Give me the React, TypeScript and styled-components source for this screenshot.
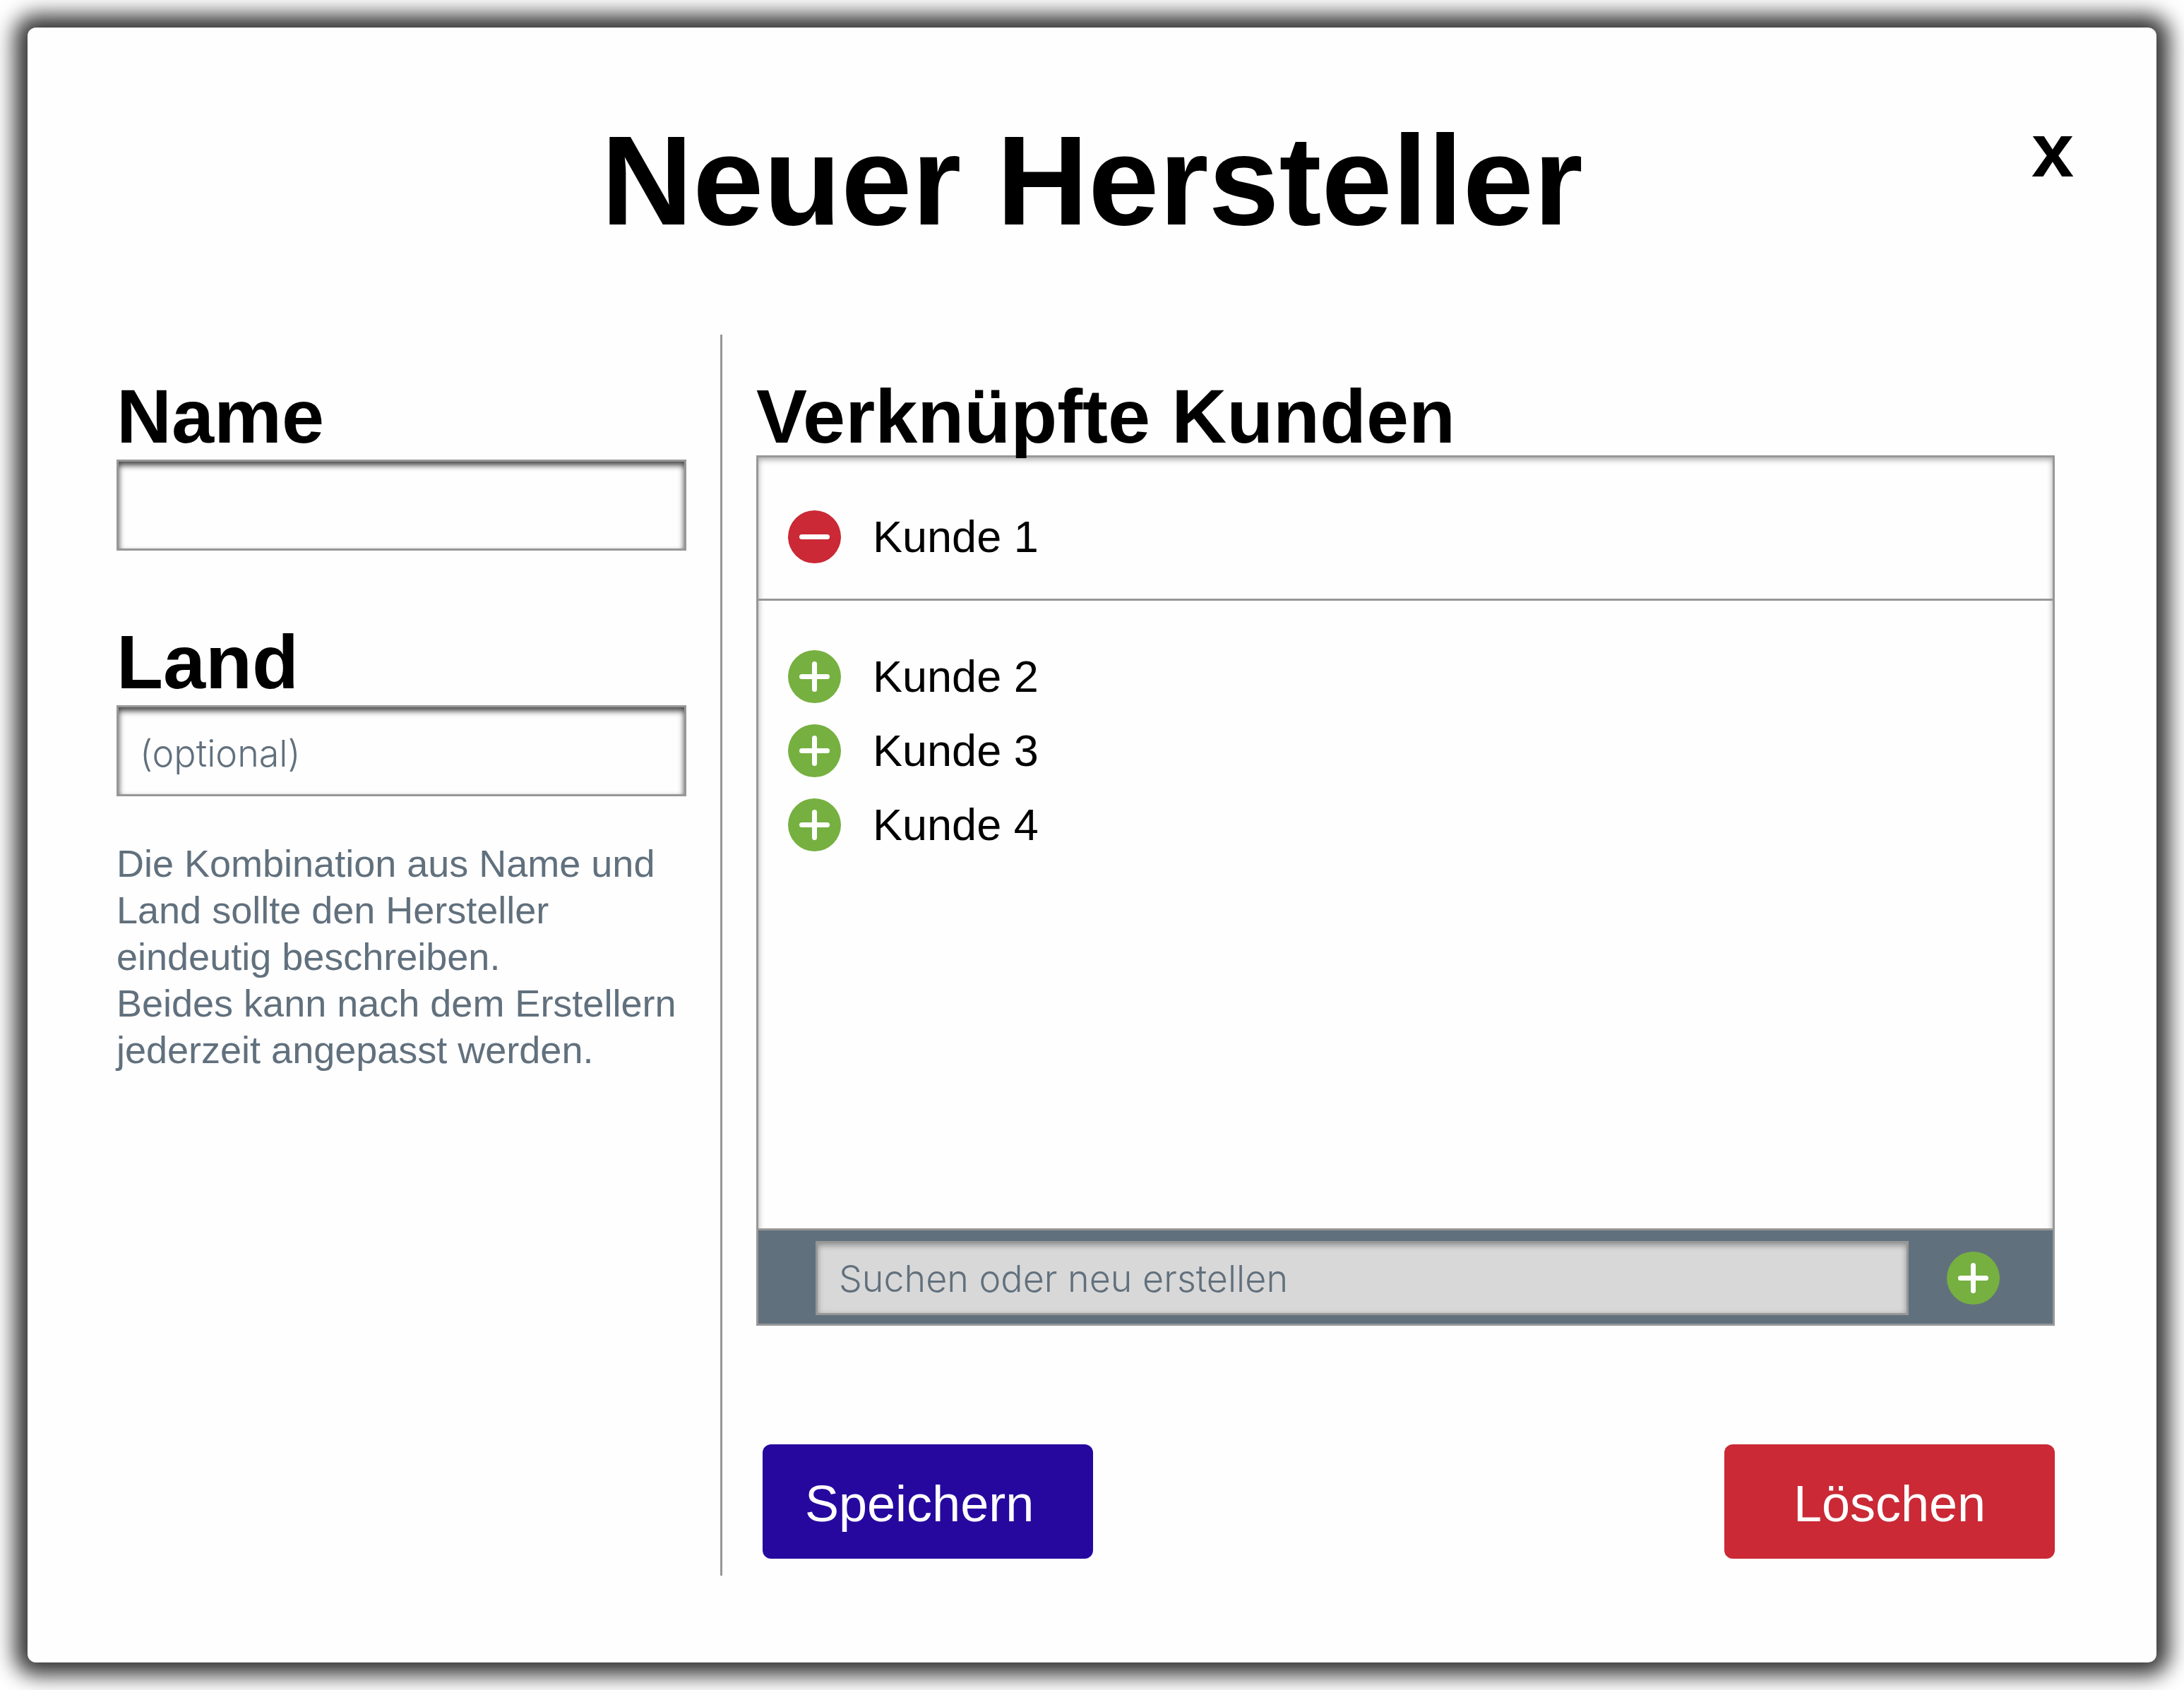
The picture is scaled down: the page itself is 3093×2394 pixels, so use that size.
import React, { useState } from "react";
import styled, { createGlobalStyle } from "styled-components";

const color = {
  surface: "#fefefe",
  line: "#979797",
  slate: "#61707d",
  field: "#d8d8d8",
  green: "#76b041",
  red: "#ca2935",
  blue: "#26089f",
};

const GlobalStyle = createGlobalStyle`
  *, *::before, *::after {
    box-sizing: border-box;
  }

  body {
    margin: 0;
    background: #ffffff;
    color: #000000;
    font-family: "Liberation Sans", Arial, Helvetica, sans-serif;
  }

  button, input {
    font-family: inherit;
  }
`;

const Page = styled.div`
  display: flex;
  min-height: 100vh;
  padding: 39px;
`;

const Dialog = styled.main`
  display: flex;
  flex: 1;
  flex-direction: column;
  min-width: 0;
  padding-bottom: 123px;
  border-radius: 12px;
  background: ${color.surface};
  box-shadow: 0 0 30px 18px rgba(0, 0, 0, 0.8);
`;

const Header = styled.header`
  display: grid;
  grid-template-columns: 1fr auto 1fr;
  align-items: start;
  padding: 120px 117px 0;
`;

const Title = styled.h1`
  grid-column: 2;
  margin: 0;
  font-size: 180px;
  font-weight: 700;
  line-height: 194px;
`;

const CloseButton = styled.button`
  justify-self: end;
  padding: 0;
  border: 0;
  background: none;
  color: inherit;
  font-size: 108px;
  font-weight: 700;
  line-height: 108px;
  cursor: pointer;
`;

const Body = styled.form`
  display: grid;
  flex: 1;
  grid-template-columns: minmax(0, 858fr) minmax(0, 1887fr);
  margin-top: 121px;
  padding: 0 144px 0 126px;
`;

const Details = styled.section`
  display: flex;
  flex-direction: column;
  padding: 60px 48px 0 0;
  border-right: 3px solid ${color.line};
`;

const Customers = styled.section`
  display: flex;
  flex-direction: column;
  padding: 60px 0 24px 48px;
`;

const Field = styled.div`
  display: flex;
  flex-direction: column;
  gap: 6px;

  & + & {
    margin-top: 102px;
  }
`;

const FieldLabel = styled.label`
  font-size: 108px;
  font-weight: 700;
  line-height: 111px;
`;

const SectionTitle = styled.h2`
  position: relative;
  z-index: 1;
  margin: 0;
  font-size: 108px;
  font-weight: 700;
  line-height: 111px;
`;

const TextInput = styled.input`
  width: 100%;
  min-width: 0;
  height: 129px;
  padding: 6px 30px 0;
  border: 3px solid ${color.line};
  border-radius: 0;
  outline: 0;
  background: ${color.surface};
  box-shadow: inset 0 5px 9px rgba(0, 0, 0, 0.75);
  color: #000000;
  font-size: 54px;

  &::placeholder {
    color: ${color.slate};
    font-family: Inter, "Liberation Sans", sans-serif;
    font-size: 52px;
    font-weight: 300;
    opacity: 1;
  }
`;

const SearchInput = styled(TextInput)`
  flex: 1;
  height: 105px;
  padding-top: 0;
  background: ${color.field};
  box-shadow: inset 0 3px 9px rgba(0, 0, 0, 0.35);
`;

const Hint = styled.p`
  margin: 62px 0 0;
  color: ${color.slate};
  font-size: 54px;
  line-height: 66px;
`;

const Panel = styled.div`
  display: flex;
  flex: 1;
  flex-direction: column;
  border: 3px solid ${color.line};
  box-shadow: inset 0 3px 9px rgba(0, 0, 0, 0.35);
`;

const CustomerList = styled.ul<{ $linked?: boolean }>`
  display: flex;
  flex: ${({ $linked }) => ($linked ? "none" : 1)};
  flex-direction: column;
  gap: 30px;
  margin: 0;
  padding: ${({ $linked }) => ($linked ? "75px 42px 50px" : "70px 42px")};
  border-bottom: 3px solid ${color.line};
  list-style: none;
`;

const CustomerRow = styled.li`
  display: flex;
  align-items: center;
  gap: 45px;
  font-size: 63px;
  line-height: 75px;
`;

const RoundButton = styled.button<{ $tone: string }>`
  flex: none;
  width: 75px;
  height: 75px;
  padding: 0;
  border: 0;
  border-radius: 50%;
  background: ${({ $tone }) => $tone};
  cursor: pointer;

  svg {
    display: block;
  }
`;

const SearchBar = styled.div`
  display: flex;
  align-items: center;
  gap: 54px;
  padding: 15px 75px 12px 81px;
  background: ${color.slate};
`;

const Actions = styled.div`
  display: flex;
  justify-content: space-between;
  margin-top: 168px;
  padding-left: 9px;
`;

const ActionButton = styled.button<{ $tone: string; $align?: string }>`
  width: 468px;
  height: 162px;
  padding: 6px 60px 0;
  border: 0;
  border-radius: 12px;
  background: ${({ $tone }) => $tone};
  color: #ffffff;
  font-size: 72px;
  text-align: ${({ $align }) => $align ?? "center"};
  cursor: pointer;
`;

function Glyph({ plus = false }: { plus?: boolean }) {
  return (
    <svg
      width="75"
      height="75"
      viewBox="0 0 75 75"
      fill="none"
      stroke="#ffffff"
      strokeWidth="7"
      strokeLinecap="round"
      aria-hidden="true"
    >
      <path d="M19.5 37.5H55.5" />
      {plus && <path d="M37.5 19.5V55.5" />}
    </svg>
  );
}

type Customer = { name: string; linked: boolean };

const initialCustomers: Customer[] = [
  { name: "Kunde 1", linked: true },
  { name: "Kunde 2", linked: false },
  { name: "Kunde 3", linked: false },
  { name: "Kunde 4", linked: false },
];

export default function App() {
  const [customers, setCustomers] = useState(initialCustomers);
  const [query, setQuery] = useState("");

  const toggle = (name: string) =>
    setCustomers((all) =>
      all.map((c) => (c.name === name ? { ...c, linked: !c.linked } : c))
    );

  const add = () => {
    const name = query.trim();
    if (!name) return;
    setCustomers((all) => [
      ...all.filter((c) => c.name !== name),
      { name, linked: true },
    ]);
    setQuery("");
  };

  const renderRow = ({ name, linked }: Customer) => (
    <CustomerRow key={name}>
      <RoundButton
        type="button"
        $tone={linked ? color.red : color.green}
        aria-label={linked ? `${name} entfernen` : `${name} hinzufügen`}
        onClick={() => toggle(name)}
      >
        <Glyph plus={!linked} />
      </RoundButton>
      <span>{name}</span>
    </CustomerRow>
  );

  return (
    <>
      <GlobalStyle />
      <Page>
        <Dialog>
          <Header>
            <Title>Neuer Hersteller</Title>
            <CloseButton type="button" aria-label="Schließen">
              x
            </CloseButton>
          </Header>
          <Body onSubmit={(event) => event.preventDefault()}>
            <Details>
              <Field>
                <FieldLabel htmlFor="name">Name</FieldLabel>
                <TextInput id="name" type="text" />
              </Field>
              <Field>
                <FieldLabel htmlFor="country">Land</FieldLabel>
                <TextInput id="country" type="text" placeholder="(optional)" />
              </Field>
              <Hint>
                Die Kombination aus Name und Land sollte den Hersteller
                eindeutig beschreiben.
                <br />
                Beides kann nach dem Erstellern jederzeit angepasst werden.
              </Hint>
            </Details>
            <Customers>
              <SectionTitle>Verknüpfte Kunden</SectionTitle>
              <Panel>
                <CustomerList $linked>
                  {customers.filter((c) => c.linked).map(renderRow)}
                </CustomerList>
                <CustomerList>
                  {customers.filter((c) => !c.linked).map(renderRow)}
                </CustomerList>
                <SearchBar>
                  <SearchInput
                    type="text"
                    aria-label="Kunden suchen oder neu erstellen"
                    placeholder="Suchen oder neu erstellen"
                    value={query}
                    onChange={(event) => setQuery(event.target.value)}
                  />
                  <RoundButton
                    type="button"
                    $tone={color.green}
                    aria-label="Kunden hinzufügen"
                    onClick={add}
                  >
                    <Glyph plus />
                  </RoundButton>
                </SearchBar>
              </Panel>
              <Actions>
                <ActionButton type="submit" $tone={color.blue} $align="left">
                  Speichern
                </ActionButton>
                <ActionButton type="button" $tone={color.red}>
                  Löschen
                </ActionButton>
              </Actions>
            </Customers>
          </Body>
        </Dialog>
      </Page>
    </>
  );
}
